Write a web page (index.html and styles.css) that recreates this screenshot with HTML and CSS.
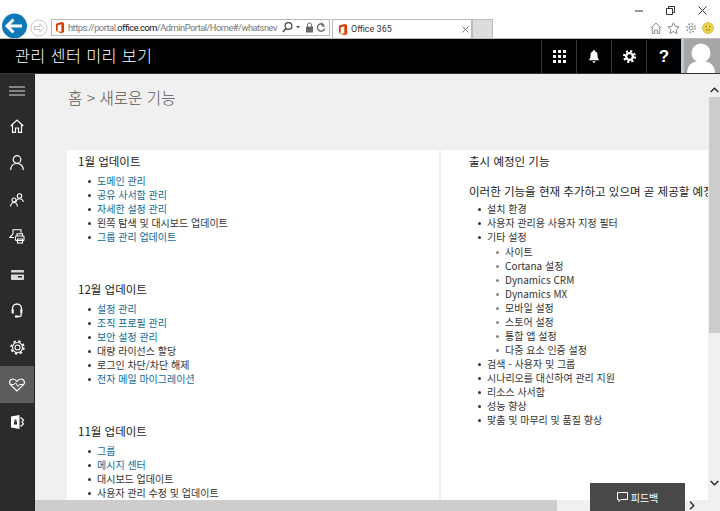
FILE: index.html
```html
<!DOCTYPE html>
<html lang="ko">
<head>
<meta charset="utf-8">
<title>Office 365</title>
<link rel="stylesheet" href="styles.css">
</head>
<body>
<div class="browser">
  <div class="nav">
    <svg class="back" width="27" height="25" viewBox="0 0 27 25"><circle cx="13.500" cy="13" r="12.500" fill="#0f78b8"/><path d="M6 13h15M12.500 6.500 6 13l6.500 6.500" fill="none" stroke="#fff" stroke-width="3"/></svg>
    <svg class="forward" width="18" height="18" viewBox="0 0 19 19"><circle cx="9.500" cy="9.500" r="8.500" fill="#fff" stroke="#c4c4c4"/><path d="M4.500 8h6V5.500l4 4-4 4V11h-6z" fill="none" stroke="#bcbcbc"/></svg>
    <div class="address">
      <svg class="office" width="10" height="13" viewBox="0 0 11 13"><path d="M1 2.500 7 .5l3 1v10l-3 1.200L1 10.500l6 .7V3L3 4v5.500l-2 1z" fill="#d83b01"/></svg>
      <span class="url">https://portal.<b>office.com</b>/AdminPortal/Home#/whatsnev</span>
      <svg width="44" height="13" viewBox="0 0 44 13" class="addr-tools"><circle cx="6.500" cy="5" r="3.400" fill="none" stroke="#444" stroke-width="1.200"/><path d="M4 7.500.8 11" stroke="#444" stroke-width="1.400"/><path d="m14 5 2 2.400L18 5z" fill="#555"/><rect x="24" y="5.500" width="7" height="6" fill="#666"/><path d="M25.500 5.500V4a2 2 0 0 1 4 0v1.500" fill="none" stroke="#666"/><path d="M42 4.500a3.600 3.600 0 1 0 .5 3" fill="none" stroke="#555" stroke-width="1.200"/><path d="M40 1.500v3.600h2.900" fill="none" stroke="#555"/></svg>
    </div>
    <div class="tab">
      <svg class="office" width="10" height="13" viewBox="0 0 11 13"><path d="M1 2.500 7 .5l3 1v10l-3 1.200L1 10.500l6 .7V3L3 4v5.500l-2 1z" fill="#d83b01"/></svg>
      <span class="tab-title">Office 365</span>
      <svg width="7" height="7" viewBox="0 0 7 7"><path d="m.5.5 6 6m0-6-6 6" stroke="#777"/></svg>
    </div>
    <div class="newtab"></div>
  </div>
  <div class="window-side">
    <div class="controls">
      <svg width="8" height="2" viewBox="0 0 8 2"><path d="M0 1h8" stroke="#333"/></svg>
      <svg width="9" height="9" viewBox="0 0 9 9"><path d="M.5 2.500h6v6h-6zM2.500 2.500v-2h6v6h-2" fill="none" stroke="#333"/></svg>
      <svg width="9" height="9" viewBox="0 0 9 9"><path d="m.5.5 8 8m0-8-8 8" stroke="#333"/></svg>
    </div>
    <div class="tools">
      <svg width="12" height="12" viewBox="0 0 12 12"><path d="M.7 6.200 6 1l5.300 5.200M2.300 5.500v6h2.400V8h2.600v3.500h2.400v-6" fill="none" stroke="#8a8a8a"/></svg>
      <svg width="13" height="12" viewBox="0 0 13 12"><path d="m6.500.8 1.700 3.600 3.900.5-2.900 2.700.8 3.900-3.500-2-3.500 2 .8-3.900L.9 4.900l3.900-.5z" fill="none" stroke="#8a8a8a"/></svg>
      <svg width="12" height="12" viewBox="0 0 12 12"><circle cx="6" cy="6" r="2" fill="none" stroke="#8a8a8a"/><circle cx="6" cy="6" r="4.200" fill="none" stroke="#8a8a8a" stroke-width="1.500" stroke-dasharray="1.600 1.700"/></svg>
      <svg width="12" height="12" viewBox="0 0 12 12"><circle cx="6" cy="6" r="5.500" fill="#f0d848" stroke="#b8a030" stroke-width=".6"/><circle cx="4.200" cy="4.500" r=".7" fill="#665"/><circle cx="7.800" cy="4.500" r=".7" fill="#665"/><path d="M3.500 7.200q2.500 2.200 5 0" fill="none" stroke="#665" stroke-width=".7"/></svg>
    </div>
  </div>
</div>

<header class="topbar">
  <h1 class="app-title">관리 센터 미리 보기</h1>
  <div class="top-btn"><svg width="13" height="13" viewBox="0 0 13 13" fill="#fff"><rect width="3" height="3"/><rect x="5" width="3" height="3"/><rect x="10" width="3" height="3"/><rect y="5" width="3" height="3"/><rect x="5" y="5" width="3" height="3"/><rect x="10" y="5" width="3" height="3"/><rect y="10" width="3" height="3"/><rect x="5" y="10" width="3" height="3"/><rect x="10" y="10" width="3" height="3"/></svg></div>
  <div class="top-btn"><svg width="12" height="13" viewBox="0 0 12 13" fill="#fff"><path d="M6 0a1 1 0 0 1 1 1.200C9 1.800 9.500 3.500 9.500 5.500c0 2.500.8 3.800 2 4.800H.5c1.200-1 2-2.300 2-4.800C2.500 3.500 3 1.800 5 1.200A1 1 0 0 1 6 0zM4.500 11.200h3a1.500 1.500 0 0 1-3 0z"/></svg></div>
  <div class="top-btn"><svg width="13" height="13" viewBox="0 0 13 13"><circle cx="6.500" cy="6.500" r="3.400" fill="none" stroke="#fff" stroke-width="2.400"/><circle cx="6.500" cy="6.500" r="5.400" fill="none" stroke="#fff" stroke-width="2.200" stroke-dasharray="2.100 2.140"/></svg></div>
  <div class="top-btn help">?</div>
  <div class="avatar"><svg width="36" height="35" viewBox="0 0 36 35"><circle cx="17" cy="14" r="9.500" fill="#fff"/><path d="M3 35c0-9 5-13 14-13s14 4 14 13z" fill="#fff"/></svg></div>
</header>

<div class="body-row">
  <nav class="sidebar">
    <div class="nav-item first"><svg width="16" height="10" viewBox="0 0 16 10"><path d="M0 1h16M0 5h16M0 9h16" stroke="#ddd"/></svg></div>
    <div class="nav-item"><svg width="14" height="14" viewBox="0 0 14 14"><path d="M.7 7 7 1l6.300 6M2.500 6v7.300h3V9h3v4.300h3V6" fill="none" stroke="#fff" stroke-width="1.200"/></svg></div>
    <div class="nav-item"><svg width="14" height="15" viewBox="0 0 14 15"><circle cx="7" cy="4.500" r="3.800" fill="none" stroke="#fff" stroke-width="1.200"/><path d="M.7 15c0-4 2.500-6.500 6.300-6.500s6.300 2.500 6.300 6.500" fill="none" stroke="#fff" stroke-width="1.200"/></svg></div>
    <div class="nav-item"><svg width="14" height="14" viewBox="0 0 14 14" fill="none" stroke="#fff" stroke-width="1.100"><circle cx="9.500" cy="3" r="2.200"/><path d="M6 9c.3-2 1.500-3.300 3.500-3.300S13 7 13.300 9"/><circle cx="4" cy="7" r="2"/><path d="M.6 13.500c.2-2.500 1.400-4 3.400-4s3.200 1.500 3.400 4"/></svg></div>
    <div class="nav-item"><svg width="16" height="15" viewBox="0 0 16 15" fill="none" stroke="#fff" stroke-width="1.100"><path d="M4 5V.8h8v3M4 5 .7 8.500H5"/><rect x="6.500" y="7" width="8.500" height="4.500" rx=".8"/><path d="M8 7V4.800h5.500V7M8.500 10h5v4h-5z"/></svg></div>
    <div class="nav-item low"><svg width="13" height="10" viewBox="0 0 13 10"><rect width="13" height="10" rx="1" fill="#d8d8d8"/><rect y="2.500" width="13" height="2" fill="#2b2b2b"/><rect x="7" y="6" width="4" height="1.500" fill="#2b2b2b"/></svg></div>
    <div class="nav-item"><svg width="12" height="15" viewBox="0 0 12 15" fill="none" stroke="#fff" stroke-width="1.300"><path d="M1.500 8.500V5.500a4.500 4.500 0 0 1 9 0v3"/><rect x=".7" y="6.500" width="2" height="4" fill="#fff" stroke="none"/><rect x="9.300" y="6.500" width="2" height="4" fill="#fff" stroke="none"/><path d="M10.300 10.500v1.500c0 1-1 1.500-2 1.500H5.500"/><rect x="4" y="12.500" width="2.500" height="2" fill="#fff" stroke="none"/></svg></div>
    <div class="nav-item"><svg width="15" height="15" viewBox="0 0 15 15"><circle cx="7.500" cy="7.500" r="2.500" fill="none" stroke="#fff" stroke-width="1.100"/><circle cx="7.500" cy="7.500" r="5" fill="none" stroke="#fff" stroke-width="1.100"/><circle cx="7.500" cy="7.500" r="6.400" fill="none" stroke="#fff" stroke-width="1.600" stroke-dasharray="2.500 2.530"/></svg></div>
    <div class="nav-item active"><svg width="16" height="14" viewBox="0 0 16 14" fill="none" stroke="#fff" stroke-width="1.200"><path d="M8 13 1.700 6.900C-.5 4.500 1 1 4 1c1.800 0 3 1 4 2.300C9 2 10.200 1 12 1c3 0 4.500 3.500 2.300 5.900z"/><path d="M1 6.500h4l1.500-1.800L9 8.500l1.500-2H15" stroke-width="1"/></svg></div>
    <div class="nav-item"><svg width="15" height="14" viewBox="0 0 15 14"><path d="M1 1.500 9.500 0v14L1 12.500z" fill="#fff"/><path d="M4 6.500h3v3H4z" fill="#2b2b2b"/><circle cx="5.500" cy="5.500" r="1.100" fill="#2b2b2b"/><path d="M10.500 2.500 13.500 5l-1.500 2 1.500 2-3 2.500" fill="none" stroke="#fff" stroke-width="1.200"/></svg></div>
  </nav>

  <div class="workspace">
    <div class="view">
      <main class="content">
        <h2 class="crumb">홈 &gt; 새로운 기능</h2>
        <div class="cards">
          <section class="card left">
            <h3>1월 업데이트</h3>
            <ul>
              <li><a>도메인 관리</a></li>
              <li><a>공유 사서함 관리</a></li>
              <li><a>자세한 설정 관리</a></li>
              <li>왼쪽 탐색 및 대시보드 업데이트</li>
              <li><a>그룹 관리 업데이트</a></li>
            </ul>
            <h3>12월 업데이트</h3>
            <ul>
              <li><a>설정 관리</a></li>
              <li><a>조직 프로필 관리</a></li>
              <li><a>보안 설정 관리</a></li>
              <li>대량 라이선스 할당</li>
              <li>로그인 차단/차단 해제</li>
              <li><a>전자 메일 마이그레이션</a></li>
            </ul>
            <h3>11월 업데이트</h3>
            <ul>
              <li><a>그룹</a></li>
              <li><a>메시지 센터</a></li>
              <li>대시보드 업데이트</li>
              <li>사용자 관리 수정 및 업데이트</li>
            </ul>
          </section>
          <section class="card right">
            <h3>출시 예정인 기능</h3>
            <p class="lead">이러한 기능을 현재 추가하고 있으며 곧 제공할 예정입니다.</p>
            <ul>
              <li>설치 환경</li>
              <li>사용자 관리용 사용자 지정 필터</li>
              <li>기타 설정
                <ul class="sub">
                  <li>사이트</li>
                  <li>Cortana 설정</li>
                  <li>Dynamics CRM</li>
                  <li>Dynamics MX</li>
                  <li>모바일 설정</li>
                  <li>스토어 설정</li>
                  <li>통합 앱 설정</li>
                  <li>다중 요소 인증 설정</li>
                </ul>
              </li>
              <li>검색 - 사용자 및 그룹</li>
              <li>시나리오를 대신하여 관리 지원</li>
              <li>리소스 사서함</li>
              <li>성능 향상</li>
              <li>맞춤 및 마무리 및 품질 향상</li>
            </ul>
          </section>
        </div>
      </main>
      <div class="vscroll">
        <svg width="9" height="6" viewBox="0 0 9 6"><path d="m.7 5 3.800-3.800L8.300 5" fill="none" stroke="#222" stroke-width="1.300"/></svg>
        <div class="vthumb"></div>
        <svg class="vdown" width="9" height="6" viewBox="0 0 9 6"><path d="m.7 1 3.800 3.800L8.300 1" fill="none" stroke="#222" stroke-width="1.300"/></svg>
      </div>
    </div>
    <div class="hscroll">
      <div class="hthumb"></div>
      <svg width="6" height="9" viewBox="0 0 6 9"><path d="m1 .7 3.800 3.800L1 8.300" fill="none" stroke="#222" stroke-width="1.300"/></svg>
    </div>
    <button class="feedback"><svg width="11" height="10" viewBox="0 0 11 10"><path d="M.5.500h10v7H4L2 9.500v-2H.5z" fill="none" stroke="#fff"/></svg>피드백</button>
  </div>
</div>
</body>
</html>
```
FILE: styles.css
```css
* { box-sizing: border-box; }
html, body { margin: 0; padding: 0; }
body {
  width: 720px; height: 511px; overflow: hidden; background: #fff;
  display: flex; flex-direction: column;
  font-family: "Noto Sans CJK KR", "Noto Sans", sans-serif;
}
svg { display: block; flex: none; }

.browser { height: 39px; display: flex; justify-content: space-between; background: #fff; border-bottom: 1px solid #b8b8b8; flex: none; }
.nav { display: flex; align-items: flex-end; padding-left: 1px; }
.back { margin-right: 2px; }
.forward { margin-bottom: 1px; margin-right: 3px; }
.address { width: 279px; height: 17px; border: 1px solid #b8b8b8; display: flex; align-items: center; padding-left: 1px; margin-bottom: 2px; margin-right: 2px; overflow: hidden; }
.office { margin: 0 3px 0 2px; }
.url { font: 9.300px Roboto, sans-serif; letter-spacing: -.5px; color: #777; white-space: nowrap; width: 212px; overflow: hidden; }
.url b { font-weight: 400; color: #111; }
.addr-tools { margin-left: 2px; }
.tab { width: 140px; height: 19px; border: 1px solid #b8b8b8; border-bottom: 0; display: flex; align-items: center; padding-left: 3px; color: #333; }
.tab-title { width: 111px; font: 9px Roboto, sans-serif; }
.newtab { width: 21px; height: 19px; background: #dcdcdc; border: 1px solid #bdbdbd; border-bottom: 0; }
.window-side { display: flex; flex-direction: column; width: 72px; align-items: flex-end; }
.controls { display: flex; align-items: center; gap: 23px; height: 19px; margin-right: 13px; margin-top: 1px; }
.tools { display: flex; gap: 5px; margin-right: 6px; margin-top: 2px; align-items: center; }

.topbar { height: 35px; flex: none; background: #000; display: flex; align-items: stretch; color: #fff; border-bottom: 1px solid #333; }
.app-title { margin: 0 auto 0 15px; font-size: 16.300px; font-weight: 300; line-height: 33px; letter-spacing: .35px; }
.top-btn { width: 35px; border-left: 1px solid #3a3a3a; display: flex; align-items: center; justify-content: center; margin-top: 1px; }
.help { font: 700 17px "Liberation Sans", sans-serif; }
.avatar { width: 39px; background: #a6a6a6; border-left: 3px solid #b7cbd8; overflow: hidden; }

.body-row { flex: 1; display: flex; min-height: 0; }
.sidebar { width: 35px; flex: none; background: #2b2b2b; display: flex; flex-direction: column; border-right: 1px solid #222; }
.nav-item { height: 37px; display: flex; align-items: center; justify-content: center; }
.nav-item.first { height: 33px; }
.nav-item.low { padding-top: 3px; }
.nav-item.active { background: #5c5c5c; }

.workspace { flex: 1; min-width: 0; display: flex; flex-direction: column; position: relative; background: #f0f0f0; }
.view { flex: 1; min-height: 0; display: flex; }
.content { flex: 1; min-width: 0; overflow: hidden; padding-left: 32px; }
.crumb { margin: 13px 0 0 1px; font-size: 15.600px; font-weight: 300; color: #555; line-height: 20px; }
.cards { display: flex; gap: 2px; margin-top: 43px; width: 641px; height: 351px; }
.card { background: #fff; padding-left: 11px; font-size: 10px; color: #333; overflow: hidden; white-space: nowrap; }
.left { width: 372px; }
.right { width: 267px; padding-left: 28px; }
h3 { margin: 4px 0 0; font-size: 11.500px; font-weight: 400; line-height: 15px; color: #222; }
.left h3 + ul { margin-bottom: 38px; }
ul { list-style: none; margin: 5px 0 0; padding: 0 0 0 19px; }
li { line-height: 14px; }
li::before { content: ""; display: inline-block; width: 3px; height: 3px; border-radius: 50%; background: #333; margin-left: -9px; margin-right: 6px; vertical-align: 2px; }
a { color: #0f6a96; }
.lead { margin: 15px 0 0; font-size: 11.500px; line-height: 15px; color: #222; }
.right ul { margin-top: 3px; padding-left: 18px; }
.right ul.sub { margin-top: 1px; padding-left: 18px; }
.sub li::before { background: #888; }

.vscroll { width: 11px; flex: none; background: #f0f0f0; display: flex; flex-direction: column; align-items: center; padding-top: 13px; }
.vthumb { width: 11px; height: 236px; margin-top: 4px; background: #cdcdcd; }
.vdown { margin-top: auto; margin-bottom: 14px; }
.hscroll { height: 11px; flex: none; display: flex; align-items: center; background: #f0f0f0; }
.hthumb { width: 522px; height: 11px; background: #cdcdcd; margin-right: auto; }
.hscroll svg { margin-right: 25px; }
.feedback { position: absolute; right: 35px; bottom: 0; width: 95px; height: 28px; background: #484848; border: 0; color: #fff; font: 10px "Noto Sans CJK KR", sans-serif; display: flex; align-items: center; justify-content: center; gap: 3px; padding: 0; }
```
